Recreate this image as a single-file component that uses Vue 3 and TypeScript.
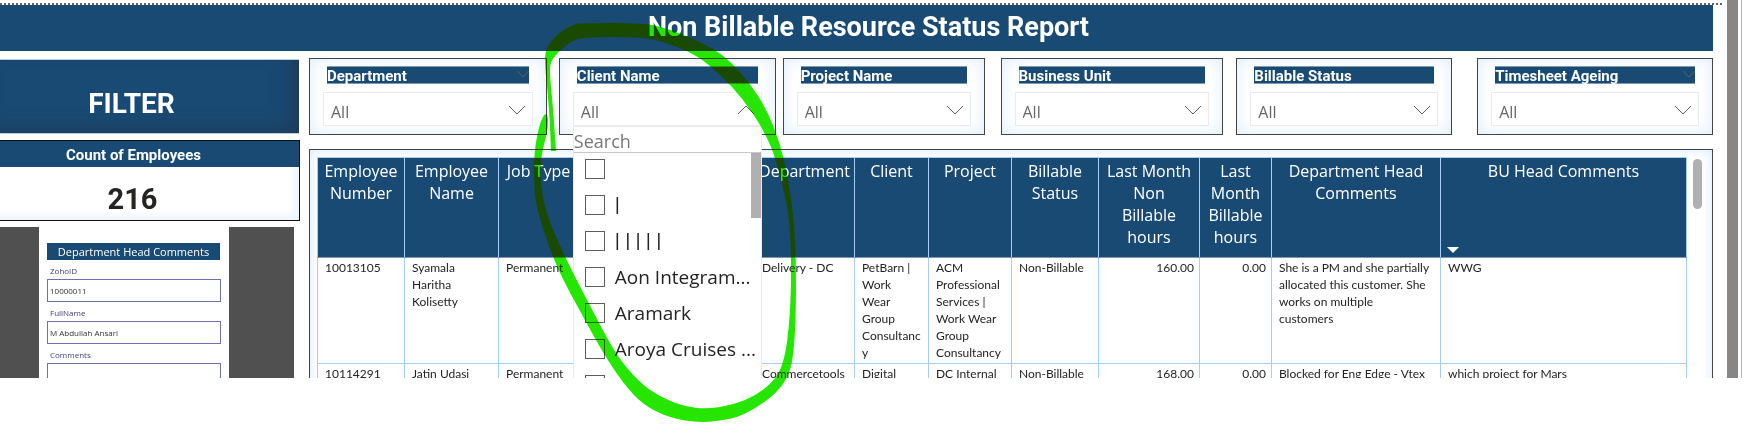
<script setup lang="ts">
import { ref } from 'vue'

interface Filter {
  id: string
  label: string
  open?: boolean
  headerChevron?: boolean
}

const filters: Filter[] = [
  { id: 'department', label: 'Department', headerChevron: true },
  { id: 'client', label: 'Client Name', open: true },
  { id: 'project', label: 'Project Name' },
  { id: 'unit', label: 'Business Unit' },
  { id: 'billable', label: 'Billable Status' },
  { id: 'ageing', label: 'Timesheet Ageing', headerChevron: true },
]

const clients = ['', '|', '| | | | |', 'Aon Integram...', 'Aramark', 'Aroya Cruises ...', '']

interface Column {
  title: string
  share: number
  numeric?: boolean
  sorted?: boolean
}

const columns: Column[] = [
  { title: 'Employee Number', share: 87 },
  { title: 'Employee Name', share: 94 },
  { title: 'Job Type', share: 80 },
  { title: '', share: 176 },
  { title: 'Department', share: 100 },
  { title: 'Client', share: 74 },
  { title: 'Project', share: 83 },
  { title: 'Billable Status', share: 87 },
  { title: 'Last Month\nNon\nBillable\nhours', share: 101, numeric: true },
  { title: 'Last Month Billable hours', share: 72, numeric: true },
  { title: 'Department Head Comments', share: 169 },
  { title: 'BU Head Comments', share: 246, sorted: true },
]
const total = columns.reduce((sum, c) => sum + c.share, 0)

const rows: string[][] = [
  ['10013105', 'Syamala Haritha Kolisetty', 'Permanent', '', 'Delivery - DC', 'PetBarn |\nWork\nWear\nGroup\nConsultancy',
    'ACM Professional Services | Work Wear Group Consultancy', 'Non-Billable', '160.00', '0.00',
    'She is a PM and she partially allocated this customer. She works on multiple\ncustomers', 'WWG'],
  ['10114291', 'Jatin Udasi', 'Permanent', '', 'Commercetools', 'Digital', 'DC Internal', 'Non-Billable', '168.00', '0.00',
    'Blocked for Eng Edge - Vtex', 'which project for Mars'],
]

const zohoId = ref('10000011')
const fullName = ref('M Abdullah Ansari')
const comments = ref('')

// Outline of the hand-drawn marker loop, smoothed through its midpoints.
const outline: [number, number][] = [
  [551, 151], [550, 125], [548, 95], [545, 67], [545, 50], [555, 36], [573, 24], [585, 23], [643, 23], [667, 28], [707, 45],
  [727, 58], [750, 83], [767, 110], [780, 143], [788, 177], [794, 220], [796, 260], [796, 310], [794, 350], [790, 373],
  [777, 393], [753, 410], [733, 419], [700, 423], [670, 418], [643, 405], [623, 383], [603, 353], [585, 320], [563, 280],
  [550, 250], [537, 210], [534, 187], [534, 153], [539, 126], [544, 114], [548, 114], [548, 130], [541, 155], [540, 180],
  [546, 214], [565, 257], [587, 300], [607, 338], [620, 360], [643, 386], [667, 400], [687, 407], [707, 409], [733, 405],
  [757, 395], [777, 378], [785, 357], [789, 327], [791, 293], [791, 243], [788, 210], [783, 187], [775, 157], [767, 137],
  [753, 113], [733, 87], [707, 63], [690, 52], [667, 43], [643, 37], [583, 37], [570, 42], [557, 53], [550, 63], [550, 77],
  [553, 107], [556, 151],
]
const markerPath =
  `M${outline[0].join(' ')}` +
  outline
    .slice(1, -1)
    .map((p, i) => {
      const next = outline[i + 2]
      return `Q${p[0]} ${p[1]} ${(p[0] + next[0]) / 2} ${(p[1] + next[1]) / 2}`
    })
    .join('') +
  `L${outline[outline.length - 1].join(' ')}Z`
</script>

<template>
  <div class="page">
    <div class="viewport">
      <div class="report">
        <div class="dots"></div>
        <h1 class="banner">Non Billable Resource Status Report</h1>
        <div class="body">
          <aside class="side">
            <h2 class="filter-title">FILTER</h2>
            <section class="count">
              <h3>Count of Employees</h3>
              <p>216</p>
            </section>
            <div class="app-frame">
              <form class="form" @submit.prevent>
                <h4>Department Head Comments</h4>
                <label for="zoho">ZohoID</label>
                <input id="zoho" v-model="zohoId" type="text" />
                <label for="fullname">FullName</label>
                <input id="fullname" v-model="fullName" type="text" />
                <label for="comments">Comments</label>
                <textarea id="comments" v-model="comments"></textarea>
              </form>
            </div>
          </aside>

          <main class="main">
            <div class="filters">
              <div v-for="f in filters" :key="f.id" class="card">
                <div class="card-head">
                  <label :for="f.id">{{ f.label }}</label>
                  <svg v-if="f.headerChevron" class="head-chevron" viewBox="0 0 12 8"><path d="M0.5 1l5.500 6l5.500 -6" /></svg>
                </div>
                <div class="picker">
                  <select :id="f.id"><option>All</option></select>
                  <svg class="chevron" viewBox="0 0 18 10">
                    <path :d="f.open ? 'M1 9l8 -8l8 8' : 'M1 1l8 8l8 -8'" />
                  </svg>
                  <div v-if="f.open" class="menu">
                    <input class="search" type="text" placeholder="Search" aria-label="Search" />
                    <div class="options">
                      <label v-for="(c, i) in clients" :key="i" class="option">
                        <input type="checkbox" /><span :class="{ bars: c.startsWith('|') }">{{ c }}</span>
                      </label>
                      <span class="menu-thumb"></span>
                    </div>
                  </div>
                </div>
              </div>
            </div>

            <section class="panel">
              <table>
                <colgroup>
                  <col v-for="(c, i) in columns" :key="i" :style="{ width: (c.share / total) * 100 + '%' }" />
                </colgroup>
                <thead>
                  <tr>
                    <th v-for="(c, i) in columns" :key="i">{{ c.title }}<svg v-if="c.sorted" class="sort" viewBox="0 0 12 6"><path d="M0 0h12l-6 6z" /></svg></th>
                  </tr>
                </thead>
                <tbody>
                  <tr v-for="r in rows" :key="r[0]">
                    <td v-for="(cell, i) in r" :key="i" :class="{ num: columns[i].numeric }">{{ cell }}</td>
                  </tr>
                </tbody>
              </table>
              <span class="panel-thumb"></span>
            </section>
          </main>
        </div>
      </div>
      <div class="scrollbar"></div>
    </div>
    <svg class="marker" viewBox="0 0 1745 424"><path :d="markerPath" /></svg>
  </div>
</template>

<style>
html,
body {
  background: #fff;
  overflow: hidden;
}
</style>

<style scoped>
* {
  box-sizing: border-box;
}
.page {
  position: relative;
  height: 100vh;
  padding-bottom: 46px;
  background: #fff;
  font-family: 'Open Sans', 'Noto Sans', sans-serif;
  color: #252423;
}
h1, h2, h3, h4, p {
  margin: 0;
}
.viewport {
  display: flex;
  height: 100%;
  overflow: hidden;
}
.report {
  flex: 1;
  min-width: 0;
}
.scrollbar {
  width: 11px;
  margin: 0 7px 0 5px;
  background: #898785;
  box-shadow: 3px 0 #fff, 4px 0 #b5b5b5;
}
.dots {
  height: 2px;
  margin-top: 3px;
  background: repeating-linear-gradient(90deg, #606060 0 2px, #fff 2px 4px);
}
.banner {
  height: 46px;
  margin-right: 9px;
  padding-left: 24px;
  background: #194a73;
  color: #fff;
  font: 700 27px/44px Roboto, sans-serif;
  text-align: center;
}
.body {
  display: grid;
  grid-template-columns: 300px minmax(0, 1fr);
  gap: 9px;
  margin: 7px 9px 0 0;
}
.filter-title {
  height: 75px;
  margin: 1px 1px 0 0;
  padding: 8px 36px 0 0;
  border: solid #b9cbdc;
  border-width: 1px 0;
  background: #194a73;
  box-shadow: inset -12px -8px 18px -4px #1f3b5a;
  color: #fff;
  font: 700 28px/72px Roboto, sans-serif;
  text-align: center;
}
.count {
  margin-top: 6px;
  height: 81px;
  border: 1px solid #111;
  border-left: 0;
  box-shadow: inset -8px -8px 10px -4px #eaf3fd;
}
.count h3 {
  height: 26px;
  padding-right: 32px;
  background: #194a73;
  color: #fff;
  font: 700 15px/28px Roboto, sans-serif;
  text-align: center;
}
.count p {
  padding: 8px 34px 0 0;
  font: 700 29px/48px Roboto, sans-serif;
  text-align: center;
}
.app-frame {
  margin: 6px 6px 0 0;
  padding: 0 65px 0 39px;
  background: #505050;
}
.form {
  display: flex;
  flex-direction: column;
  height: 220px;
  padding: 16px 8px 0;
  background: #fff;
}
.form h4 {
  height: 17px;
  margin-right: 1px;
  background: #194a73;
  color: #fff;
  font-size: 11px;
  font-weight: 400;
  line-height: 18px;
  text-align: center;
}
.form label {
  height: 19px;
  padding: 2px 0 0 3px;
  color: #3b3f80;
  font-size: 8px;
  line-height: 18px;
}
.form input,
.form textarea {
  height: 23px;
  padding: 0 2px;
  border: 1px solid #6a72ab;
  border-radius: 0;
  background: #fff;
  color: #333;
  font: 8px/20px 'Open Sans', sans-serif;
  outline: 0;
  resize: none;
}
.form textarea {
  height: 60px;
}
.filters {
  display: grid;
  grid-template-columns: 238fr 12px 217fr 7px 202fr 16px 223fr 13px 216fr 25px 236fr;
}
.card {
  grid-row: 1;
  height: 77px;
  padding: 7px 13px 0;
  border: 1px solid #444;
  box-shadow: inset 0 0 16px #dcecfc;
}
.card:nth-child(1) { grid-column: 1; }
.card:nth-child(2) { grid-column: 3; }
.card:nth-child(3) { grid-column: 5; }
.card:nth-child(4) { grid-column: 7; }
.card:nth-child(5) { grid-column: 9; }
.card:nth-child(6) { grid-column: 11; }
.card-head {
  display: flex;
  justify-content: space-between;
  height: 18px;
  margin: 0 4px;
  border: solid #7c98b2;
  border-width: 1px 0;
  background: #194a73;
  color: #fff;
  font: 700 15px/18px Roboto, sans-serif;
}
.head-chevron {
  width: 12px;
  height: 8px;
  margin-top: 3px;
}
.head-chevron path,
.chevron path {
  fill: none;
  stroke: #605e5c;
  stroke-width: 1;
}
.picker {
  position: relative;
  margin-top: 8px;
  height: 34px;
}
select {
  display: block;
  width: 100%;
  height: 100%;
  padding: 6px 7px 0;
  border: 1px solid #eaeaea;
  border-radius: 0;
  background: #fff;
  appearance: none;
  color: #666;
  font: 16px/22px 'Open Sans', sans-serif;
  outline: 0;
}
.chevron {
  position: absolute;
  right: 7px;
  top: 13px;
  width: 18px;
  height: 10px;
  pointer-events: none;
}
.menu {
  position: absolute;
  z-index: 2;
  top: 100%;
  left: 0;
  right: 0;
  border: 1px solid #eaeaea;
  background: #fff;
}
.search {
  display: block;
  width: 100%;
  height: 26px;
  padding: 2px 0 0;
  border: 0;
  border-bottom: 1px solid #c8c8c8;
  background: #fff;
  font: 18px/24px 'Open Sans', sans-serif;
  outline: 0;
}
.search::placeholder {
  color: #777;
}
.options {
  position: relative;
  display: flex;
  flex-direction: column;
  gap: 16px;
  padding: 6px 0 6px 11px;
}
.option {
  display: flex;
  align-items: center;
  gap: 10px;
  height: 20px;
  font-size: 19px;
  line-height: 26px;
  white-space: pre;
}
.option input {
  width: 20px;
  height: 20px;
  margin: 0;
  border: 1px solid #605e5c;
  background: #fff;
  appearance: none;
}
.option .bars {
  font-family: Roboto, sans-serif;
  font-size: 21px;
}
.menu-thumb {
  position: absolute;
  top: 0;
  right: 0;
  width: 10px;
  height: 65px;
  background: #b0b0b0;
}
.panel {
  display: flex;
  align-items: flex-start;
  gap: 6px;
  height: 400px;
  margin-top: 14px;
  padding: 7px 10px 0 7px;
  border: 1px solid #444;
  box-shadow: inset 0 0 12px #d5e9ff;
}
.panel-thumb {
  width: 9px;
  height: 50px;
  margin-top: 2px;
  border-radius: 5px;
  background: #b0b0b0;
}
table {
  flex: 1;
  min-width: 0;
  table-layout: fixed;
  border-collapse: collapse;
  background: #fff;
}
th {
  position: relative;
  height: 100px;
  padding: 2px 4px 0;
  border: 1px solid #a5cdf5;
  border-bottom-color: #7c98b2;
  background: #194a73;
  color: #fff;
  font-size: 16px;
  font-weight: 400;
  line-height: 22px;
  vertical-align: top;
  white-space: pre-line;
}
.sort {
  position: absolute;
  left: 6px;
  bottom: 4px;
  width: 12px;
  height: 6px;
}
.sort path {
  fill: #fff;
}
td {
  padding: 1px 5px 2px 7px;
  border: 1px solid #a5cdf5;
  font: 12px/17px Lato, sans-serif;
  vertical-align: top;
  overflow-wrap: anywhere;
  white-space: pre-line;
}
td.num {
  text-align: right;
}
.marker {
  position: absolute;
  z-index: 5;
  top: 0;
  left: 0;
  width: 100%;
  height: auto;
  mix-blend-mode: darken;
  pointer-events: none;
}
.marker path {
  fill: #26e600;
}
</style>
